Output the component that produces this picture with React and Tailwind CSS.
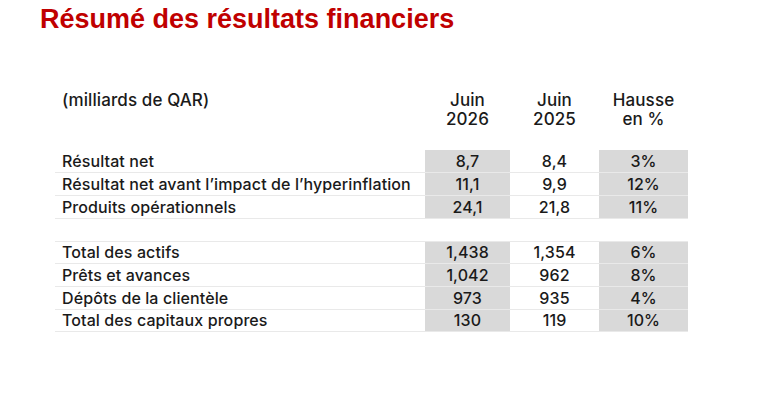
const groups = [
  [
    ['Résultat net', '8,7', '8,4', '3%'],
    ['Résultat net avant l’impact de l’hyperinflation', '11,1', '9,9', '12%'],
    ['Produits opérationnels', '24,1', '21,8', '11%'],
  ],
  [
    ['Total des actifs', '1,438', '1,354', '6%'],
    ['Prêts et avances', '1,042', '962', '8%'],
    ['Dépôts de la clientèle', '973', '935', '4%'],
    ['Total des capitaux propres', '130', '119', '10%'],
  ],
];

function Row({ row, first }) {
  const line = first ? 'border-t border-[#e9e9e9]' : '';
  return (
    <tr className="h-[22.7px]">
      <td className={`pl-[7px] border-b border-[#e9e9e9] ${line}`}>{row[0]}</td>
      <td className={`text-center bg-[#d9d9d9] border-b border-[#e9e9e9] ${line}`}>{row[1]}</td>
      <td className={`text-center border-b border-[#e9e9e9] ${line}`}>{row[2]}</td>
      <td className={`text-center bg-[#d9d9d9] border-b border-[#e9e9e9] ${line}`}>{row[3]}</td>
    </tr>
  );
}

export default function App() {
  return (
    <div className="w-[773px] h-[411px] bg-white overflow-hidden">
      <h1 className="pl-[40px] pt-[4px] text-[27px] leading-[31px] font-bold text-[#c00000] font-['Liberation_Sans',Arial,sans-serif]">
        Résumé des résultats financiers
      </h1>

      <table className="ml-[55px] mt-[53px] table-fixed border-collapse text-[16px] leading-[20px] font-medium text-[#1a1a1a] font-['Inter',sans-serif] tracking-[0.1px]">
        <colgroup>
          <col className="w-[370px]" />
          <col className="w-[85px]" />
          <col className="w-[89px]" />
          <col className="w-[89px]" />
        </colgroup>
        <thead>
          <tr className="h-[62px] align-top text-[17px] leading-[18.5px]">
            <th className="pl-[7px] pt-[3px] text-left font-medium">(milliards de QAR)</th>
            <th className="pt-[3px] font-medium">Juin<br />2026</th>
            <th className="pt-[3px] font-medium">Juin<br />2025</th>
            <th className="pt-[3px] font-medium">Hausse<br />en %</th>
          </tr>
        </thead>
        <tbody>
          {groups[0].map((r) => (
            <Row key={r[0]} row={r} first={false} />
          ))}
          <tr className="h-[23px]">
            <td colSpan={4}></td>
          </tr>
          {groups[1].map((r, i) => (
            <Row key={r[0]} row={r} first={i === 0} />
          ))}
        </tbody>
      </table>
    </div>
  );
}
